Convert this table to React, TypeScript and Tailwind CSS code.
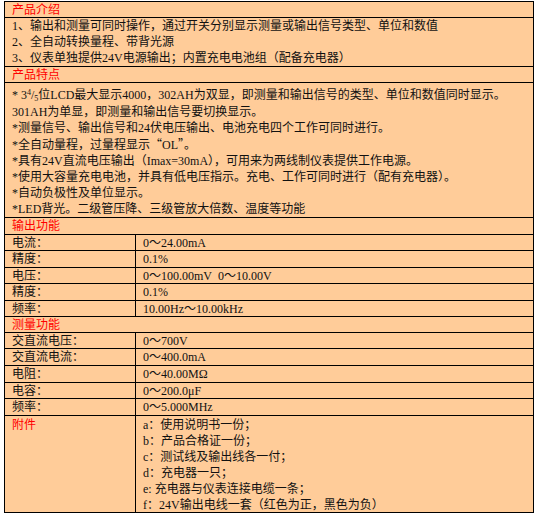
import React from 'react';

const font = { fontFamily: '"Liberation Serif", "Noto Sans CJK SC", serif' };

function Header({ children, h }: { children: React.ReactNode; h: string }) {
  return (
    <div className={`${h} flex items-center px-[7px] text-[12px] text-[#ff0000] border-b border-black`}>
      {children}
    </div>
  );
}

function Row({ label, value, h }: { label: string; value: string; h: string }) {
  return (
    <div className="grid grid-cols-[130px_1fr] border-b border-black">
      <div className={`${h} flex items-center px-[7px]`}>{label}</div>
      <div className={`${h} flex items-center px-[7px] border-l border-black`}>{value}</div>
    </div>
  );
}

const output: [string, string, string][] = [
  ['电流：', '0～24.00mA', 'h-[15px]'],
  ['精度：', '0.1%', 'h-[16px]'],
  ['电压：', '0～100.00mV\u00a0\u00a00～10.00V', 'h-[15px]'],
  ['精度：', '0.1%', 'h-[16px]'],
  ['频率：', '10.00Hz～10.00kHz', 'h-[15px]'],
];

const measure: [string, string, string][] = [
  ['交直流电压：', '0～700V', 'h-[15px]'],
  ['交直流电流：', '0～400.0mA', 'h-[16px]'],
  ['电阻：', '0～40.00MΩ', 'h-[16px]'],
  ['电容：', '0～200.0μF', 'h-[15px]'],
  ['频率：', '0～5.000MHz', 'h-[16px]'],
];

const cjk = { fontFamily: '"Noto Sans CJK SC", sans-serif' };

const features: React.ReactNode[] = [
  '301AH为单显，即测量和输出信号要切换显示。',
  '*测量信号、输出信号和24伏电压输出、电池充电四个工作可同时进行。',
  <>
    *全自动量程，过量程显示<span style={cjk}>“</span>OL<span style={cjk}>”</span>。
  </>,
  '*具有24V直流电压输出（Imax=30mA），可用来为两线制仪表提供工作电源。',
  '*使用大容量充电电池，并具有低电压指示。充电、工作可同时进行（配有充电器）。',
  '*自动负极性及单位显示。',
  '*LED背光。二级管压降、三级管放大倍数、温度等功能',
];

const accessories = [
  'a：使用说明书一份；',
  'b：产品合格证一份；',
  'c：测试线及输出线各一付；',
  'd：充电器一只；',
  'e: 充电器与仪表连接电缆一条；',
  'f：24V输出电线一套（红色为正，黑色为负）',
];

export default function App() {
  return (
    <div className="w-[538px] h-[513px] bg-white pt-px pl-[4px] text-[12px] text-[#111]" style={font}>
      <div className="w-[530px] border border-black bg-[#ffcc99]">
        <Header h="h-[16px]">产品介绍</Header>
        <div className="px-[7px] leading-[16px] border-b border-black">
          <div>1、输出和测量可同时操作，通过开关分别显示测量或输出信号类型、单位和数值</div>
          <div>2、全自动转换量程、带背光源</div>
          <div>3、仪表单独提供24V电源输出；内置充电电池组（配备充电器）</div>
        </div>
        <Header h="h-[16px]">产品特点</Header>
        <div className="px-[7px] leading-[16px] border-b border-black">
          <div className="h-[21px] flex items-end pb-[1px]">
            <span>
              * 3<sup className="text-[8px]">4</sup>/<sub className="text-[8px]">5</sub>位LCD最大显示4000，302AH为双显，即测量和输出信号的类型、单位和数值同时显示。
            </span>
          </div>
          {features.map((f, i) => (
            <div key={i}>{f}</div>
          ))}
        </div>
        <Header h="h-[17px]">输出功能</Header>
        {output.map(([l, v, h]) => (
          <Row key={l + v} label={l} value={v} h={h} />
        ))}
        <Header h="h-[16px]">测量功能</Header>
        {measure.map(([l, v, h]) => (
          <Row key={l + v} label={l} value={v} h={h} />
        ))}
        <div className="grid grid-cols-[130px_1fr] h-[96px]">
          <div className="px-[7px] pt-px leading-[16px] text-[#ff0000]">附件</div>
          <div className="px-[7px] pt-px leading-[16px] border-l border-black">
            {accessories.map((a) => (
              <div key={a}>{a}</div>
            ))}
          </div>
        </div>
      </div>
    </div>
  );
}
